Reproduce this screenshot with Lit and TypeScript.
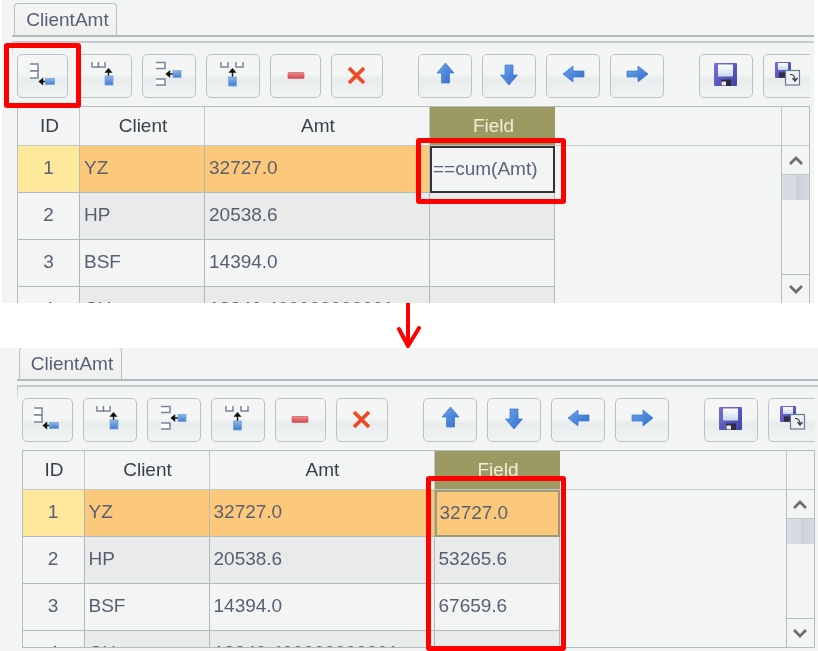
import { LitElement, html, css, svg } from "lit";
import { customElement, property } from "lit/decorators.js";

const bracket = (x: number, y: number, w: number, h: number, open: "left" | "up") => {
  const d = open === "left"
    ? `M${x} ${y}H${x + w}V${y + h}H${x}`
    : `M${x} ${y}V${y + h}H${x + w}V${y}`;
  return svg`<path d=${d} fill="#fff" stroke="#75849a" stroke-width="1.5"/>`;
};
const blueCell = (x: number, y: number, w: number, h: number) =>
  svg`<rect x=${x} y=${y} width=${w} height=${h} fill="url(#cell)" stroke="#7ba3d6" stroke-width=".8"/>`;

const icons: Record<string, unknown> = {
  addCol: svg`${bracket(2, 3, 8, 7, "left")}${bracket(2, 10, 8, 7, "left")}
    <path d="M11.5 20.5h6M14.5 18l-3 2.5 3 2.5z" stroke="#111" stroke-width="1.4" fill="#111"/>${blueCell(17.5, 17.5, 9, 6)}`,
  addRow: svg`${bracket(2, 1, 6.5, 5, "up")}${bracket(8.5, 1, 6.5, 5, "up")}
    <path d="M18.5 15V8.5M16 11l2.5-3 2.5 3z" stroke="#111" stroke-width="1.4" fill="#111"/>${blueCell(15, 15, 8, 9)}`,
  insCol: svg`${bracket(2, 1.5, 9, 6, "left")}${bracket(2, 18, 9, 6, "left")}
    <path d="M12.5 13h6.5M15.5 10.5l-3 2.5 3 2.5z" stroke="#111" stroke-width="1.4" fill="#111"/>${blueCell(19, 9.5, 8, 7)}`,
  insRow: svg`${bracket(3, 1, 7, 5, "up")}${bracket(18, 1, 7, 5, "up")}
    <path d="M14.5 16V8.5M12 11l2.5-3 2.5 3z" stroke="#111" stroke-width="1.4" fill="#111"/>${blueCell(10.5, 16, 8, 9)}`,
  minus: svg`<rect x="7" y="11.5" width="16" height="6" rx=".8" fill="url(#minus)" stroke="#cf4c52" stroke-width=".6"/>`,
  close: svg`<path d="M7 7L22 22M22 7L7 22" stroke="#ee4a25" stroke-width="3.8" fill="none"/>`,
  up: svg`<path d="M15.5 2L24 12H19.5V22H11.5V12H7Z" fill="url(#arrow)" stroke="#3b74cc" stroke-width=".7"/>`,
  down: svg`<path d="M15 24L6.5 14H11V4H19V14H23.5Z" fill="url(#arrow)" stroke="#3b74cc" stroke-width=".7"/>`,
  left: svg`<path d="M5 13L15 5V10H26V16H15V21Z" fill="url(#arrow)" stroke="#3b74cc" stroke-width=".7"/>`,
  right: svg`<path d="M26 13L16 5V10H5V16H16V21Z" fill="url(#arrow)" stroke="#3b74cc" stroke-width=".7"/>`,
  save: svg`<rect x="3" y="2" width="23" height="23" rx="1" fill="url(#disk)"/>
    <rect x="7" y="3.5" width="15" height="12" fill="url(#label)"/>
    <rect x="10" y="18.5" width="10" height="6.5" fill="#2c2c3c"/><rect x="10.5" y="20.5" width="4.5" height="4" fill="#e8e8ef"/>`,
  saveAs: svg`<rect x="0" y="1" width="16" height="16" rx="1" fill="url(#disk)"/>
    <rect x="3" y="2" width="10" height="7" fill="url(#label)"/><rect x="4" y="11.5" width="8" height="5" fill="#2c2c3c"/>
    <rect x="10.5" y="9.5" width="14" height="14.5" fill="#eef1f4" stroke="#6a7a92" stroke-width="1.2"/>
    <path d="M15 13.5c4 0 5 2 5 5M17.5 17l2.5 3 2.5-3" fill="none" stroke="#334" stroke-width="1.2"/>`,
};

type Btn = [string, string];
const buttons: Btn[] = [
  ["addCol", "w51"], ["addRow", ""], ["insCol", ""], ["insRow", ""], ["minus", "w51"], ["close", "w52"],
  ["up", "sep"], ["down", ""], ["left", ""], ["right", ""], ["save", "sep"], ["saveAs", ""],
];

@customElement("data-panel")
export class DataPanel extends LitElement {
  @property({ reflect: true }) variant = "before";

  static styles = css`
    :host { display: block; position: relative; height: 303px; overflow: hidden; background: #f3f5f5;
      font-family: "Liberation Sans", Arial, sans-serif; font-size: 19px; color: #5a5e70; }
    :host([variant="before"]) { margin: 0 4px 0 2px; }
    .defs { position: absolute; }
    .inner { filter: blur(.5px); padding: 3px 0 0 10px; }
    :host([variant="after"]) .inner { margin-top: -4px; padding-left: 16.5px; }
    .tabs { display: flex; height: 32px; padding-left: 2px; border-bottom: 2px solid #b1bbbe; }
    .tab { width: 103px; height: 32px; box-sizing: border-box; border: 1.5px solid #b8c2c5; border-bottom: 0; border-radius: 4px 4px 0 0;
      display: flex; align-items: center; justify-content: center; padding-left: 4px; background: linear-gradient(#f5f7f7, #eef0f0); }
    .pane { margin-top: 4px; border-top: 2px solid #c3cbce; padding: 11px 0 0 5px;
      background: linear-gradient(#b5bfc2, #f3f5f5) 0 0 / 1px 14px no-repeat; }
    .toolbar { display: flex; gap: 10px; width: 793px; overflow: hidden; }
    .btn { flex: none; width: 54px; height: 44px; box-sizing: border-box; border: 1.5px solid #b9c3c6; border-radius: 5px;
      display: flex; align-items: center; justify-content: center;
      background: linear-gradient(#f4f6f6 0, #f4f6f6 45%, #e9eced 58%, #f2f4f4 100%); }
    .btn svg { flex: none; width: 30px; height: 30px; overflow: visible; }
    .w51 { width: 51px; } .w52 { width: 52px; }
    .sep { margin-left: 25px; }
    .table { margin-top: 8px; width: 793px; height: 198px; box-sizing: border-box; border: 1.5px solid #b4bec1; display: flex; flex-direction: column; }
    .row { display: grid; grid-template-columns: 62px 125px 225px 125px; }
    .head { display: flex; height: 39px; flex: none; border-bottom: 1.5px solid #c0c8cb; box-sizing: border-box; }
    .head .row { flex: 1; }
    .corner { flex: none; width: 28px; box-sizing: border-box; border-left: 1.5px solid #c0c8cb; }
    .hc { display: flex; align-items: center; justify-content: center; padding-left: 2px; color: #3b3f4a; border-right: 1.5px solid #c0c8cb; box-sizing: border-box; }
    .hc.field { background: #9c9a62; color: #eeeedd; border-right: 0; }
    .body { flex: 1; display: flex; min-height: 0; }
    .rows { flex: 1; overflow: hidden; min-width: 0; }
    .c { height: 47px; box-sizing: border-box; border-right: 1.5px solid #b0babd; border-bottom: 1.5px solid #b0babd;
      display: flex; align-items: center; padding: 0 0 2px 4px; white-space: nowrap; overflow: hidden; background: #f3f5f5; }
    .row:nth-child(even) .c { background: #e9ebeb; }
    .c.id { justify-content: center; padding-left: 0; background: #f3f5f5; }
    .row:nth-child(even) .c.id { background: #f3f5f5; }
    .row.cur .c { background: #fcc97c; }
    .row.cur .c.id { background: #fde89c; }
    .row.cur .c.edit { background: #f3f5f5; border: 2px solid #2f3336; padding-left: 1px; color: #5c6278; }
    .row.cur .c.sel { background: #fcc97c; border: 2px solid #9a9a78; padding-left: 3px; }
    .scroll { flex: none; width: 28px; box-sizing: border-box; border-left: 1.5px solid #b4bec1; display: flex; flex-direction: column; }
    .sb { flex: none; height: 29px; display: flex; align-items: center; justify-content: center; border-bottom: 1.5px solid #c0c8cb; box-sizing: border-box; }
    .sb.down { border-bottom: 0; border-top: 1.5px solid #b4bec1; }
    .thumb { flex: none; height: 25px; background: linear-gradient(90deg, #d9dde4 0, #d5dae2 50%, #c9cfd6 55%, #d5dae2 100%); }
    .track { flex: 1; }
    .mark { position: absolute; box-sizing: border-box; border: 5px solid #f00; border-radius: 3px; }
    .m1 { left: 2px; top: 43px; width: 77px; height: 65px; }
    .m2 { left: 414px; top: 138px; width: 150px; height: 66px; }
    .m3 { left: 426px; top: 128px; width: 140px; height: 175px; }
  `;

  render() {
    const after = this.variant === "after";
    const data = [
      ["1", "YZ", "32727.0", "32727.0"],
      ["2", "HP", "20538.6", "53265.6"],
      ["3", "BSF", "14394.0", "67659.6"],
      ["4", "CH", "18340.400000000001", "86000.0"],
    ];
    return html`
      <svg class="defs" width="0" height="0">
        <defs>
          <linearGradient id="cell" x1="0" y1="0" x2="0" y2="1"><stop offset="0" stop-color="#8fb7e8"/><stop offset="1" stop-color="#3f7ccf"/></linearGradient>
          <linearGradient id="minus" x1="0" y1="0" x2="0" y2="1"><stop offset="0" stop-color="#ee8d8f"/><stop offset="1" stop-color="#d8474e"/></linearGradient>
          <linearGradient id="arrow" x1="0" y1="0" x2="1" y2="1"><stop offset="0" stop-color="#6ea6ec"/><stop offset="1" stop-color="#2f6ccb"/></linearGradient>
          <linearGradient id="disk" x1="0" y1="0" x2="1" y2="1"><stop offset="0" stop-color="#7a70d8"/><stop offset="1" stop-color="#3d44a8"/></linearGradient>
          <linearGradient id="label" x1="0" y1="0" x2="0" y2="1"><stop offset="0" stop-color="#ffffff"/><stop offset="1" stop-color="#c9d8ee"/></linearGradient>
        </defs>
      </svg>
      <div class="inner">
        <div class="tabs"><div class="tab">ClientAmt</div></div>
        <div class="pane">
          <div class="toolbar">
            ${buttons.map(([i, c]) => html`<div class="btn ${c}"><svg viewBox="0 0 30 30">${icons[i]}</svg></div>`)}
          </div>
          <div class="table">
            <div class="head">
              <div class="row">
                <div class="hc">ID</div><div class="hc">Client</div><div class="hc">Amt</div><div class="hc field">Field</div>
              </div>
              <div class="corner"></div>
            </div>
            <div class="body">
              <div class="rows">
                ${data.map((r, i) => html`
                  <div class="row ${i === 0 ? "cur" : ""}">
                    <div class="c id">${r[0]}</div><div class="c">${r[1]}</div><div class="c">${r[2]}</div>
                    ${after
                      ? html`<div class="c ${i === 0 ? "sel" : ""}">${r[3]}</div>`
                      : i === 0
                        ? html`<div class="c edit">==cum(Amt)</div>`
                        : html`<div class="c"></div>`}
                  </div>`)}
              </div>
              <div class="scroll">
                <div class="sb"><svg width="16" height="11" viewBox="0 0 16 11"><path d="M2 9L8 3L14 9" fill="none" stroke="#6c6f70" stroke-width="2.8"/></svg></div>
                <div class="thumb"></div>
                <div class="track"></div>
                <div class="sb down"><svg width="16" height="11" viewBox="0 0 16 11"><path d="M2 2L8 8L14 2" fill="none" stroke="#6c6f70" stroke-width="2.8"/></svg></div>
              </div>
            </div>
          </div>
        </div>
      </div>
      ${after
        ? html`<div class="mark m3"></div>`
        : html`<div class="mark m1"></div><div class="mark m2"></div>`}
    `;
  }
}

@customElement("app-root")
export class AppRoot extends LitElement {
  static styles = css`
    :host { display: block; width: 818px; height: 651px; overflow: hidden; background: #fff; }
    .gap { height: 45px; padding-left: 397px; }
    .gap svg { display: block; }
  `;
  render() {
    return html`
      <data-panel variant="before"></data-panel>
      <div class="gap">
        <svg width="24" height="45" viewBox="0 0 24 45">
          <path d="M11 0V43M2 26L11 43L22 25" fill="none" stroke="#f00" stroke-width="4" stroke-linecap="round" stroke-linejoin="round"/>
        </svg>
      </div>
      <data-panel variant="after"></data-panel>
    `;
  }
}
